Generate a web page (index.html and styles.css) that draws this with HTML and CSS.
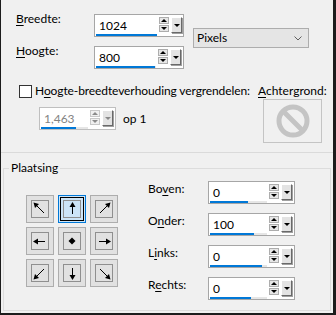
FILE: index.html
```html
<!DOCTYPE html>
<html lang="nl">
<head>
    <meta charset="UTF-8">
    <title>Canvasgrootte</title>
    <link rel="stylesheet" href="styles.css">
</head>
<body>
<div class="dialog">
    <div class="top">
        <div class="size-grid">
            <label class="lbl"><u>B</u>reedte:</label>
            <div class="spin">
                <div class="val-col"><span class="val">1024</span><span class="track"><span class="fill" style="width:61px"></span></span></div>
                <div class="arrows"><span class="up"></span><span class="dn"></span></div>
                <span class="drop"></span>
            </div>
            <div class="select">Pixels
                <svg width="8" height="5" viewBox="0 0 8 5"><path d="M0.5 0.5 L4 4 L7.5 0.5" fill="none" stroke="#606060" stroke-width="1"/></svg>
            </div>
            <label class="lbl"><u>H</u>oogte:</label>
            <div class="spin">
                <div class="val-col"><span class="val">800</span><span class="track"><span class="fill" style="width:59px"></span></span></div>
                <div class="arrows"><span class="up"></span><span class="dn"></span></div>
                <span class="drop"></span>
            </div>
        </div>

        <div class="lock">
            <div class="lock-main">
                <div class="check-row"><span class="checkbox"></span><label>H<u>o</u>ogte-breedteverhouding vergrendelen:</label></div>
                <div class="ratio-row">
                    <div class="spin ratio disabled">
                        <div class="val-col"><span class="val">1,463</span><span class="track"><span class="fill" style="width:35px"></span></span></div>
                        <div class="arrows"><span class="up"></span><span class="dn"></span></div>
                        <span class="drop"></span>
                    </div>
                    <span class="op">op 1</span>
                </div>
            </div>
            <div class="bg-col">
                <label><u>A</u>chtergrond:</label>
                <div class="swatch">
                    <svg width="36" height="36" viewBox="0 0 36 36"><circle cx="18" cy="18" r="14" fill="none" stroke="#c4c4c4" stroke-width="5"/><line x1="8.5" y1="8.5" x2="27.5" y2="27.5" stroke="#c4c4c4" stroke-width="5"/></svg>
                </div>
            </div>
        </div>
    </div>

    <fieldset class="place">
        <legend>Plaatsing</legend>
        <div class="place-body">
            <div class="anchors">
                <div class="anchor"><span class="inner"><svg width="16" height="16" viewBox="0 0 16 16"><path d="M12 12 L3 3" stroke="#000"/><path d="M1.5 1.5 L7 3 L3 7 Z" fill="#000"/></svg></span></div>
                <div class="anchor sel"><span class="inner"><svg width="16" height="16" viewBox="0 0 16 16"><path d="M8.5 4 V13" stroke="#000"/><path d="M8.5 1 L11.5 6 L5.5 6 Z" fill="#000"/></svg></span></div>
                <div class="anchor"><span class="inner"><svg width="16" height="16" viewBox="0 0 16 16"><path d="M4 12 L13 3" stroke="#000"/><path d="M14.5 1.5 L13 7 L9 3 Z" fill="#000"/></svg></span></div>
                <div class="anchor"><span class="inner"><svg width="16" height="16" viewBox="0 0 16 16"><path d="M4 8.5 H13" stroke="#000"/><path d="M1 8.5 L6 5.5 L6 11.5 Z" fill="#000"/></svg></span></div>
                <div class="anchor"><span class="inner"><svg width="16" height="16" viewBox="0 0 16 16"><path d="M8 4.5 L11.5 8 L8 11.5 L4.5 8 Z" fill="#000"/></svg></span></div>
                <div class="anchor"><span class="inner"><svg width="16" height="16" viewBox="0 0 16 16"><path d="M3 8.5 H12" stroke="#000"/><path d="M15 8.5 L10 5.5 L10 11.5 Z" fill="#000"/></svg></span></div>
                <div class="anchor"><span class="inner"><svg width="16" height="16" viewBox="0 0 16 16"><path d="M12 4 L3 13" stroke="#000"/><path d="M1.5 14.5 L3 9 L7 13 Z" fill="#000"/></svg></span></div>
                <div class="anchor"><span class="inner"><svg width="16" height="16" viewBox="0 0 16 16"><path d="M8.5 3 V12" stroke="#000"/><path d="M8.5 15 L11.5 10 L5.5 10 Z" fill="#000"/></svg></span></div>
                <div class="anchor"><span class="inner"><svg width="16" height="16" viewBox="0 0 16 16"><path d="M4 4 L13 13" stroke="#000"/><path d="M14.5 14.5 L9 13 L13 9 Z" fill="#000"/></svg></span></div>
            </div>

            <div class="offsets">
                <label class="off-lbl">Bo<u>v</u>en:</label>
                <div class="spin">
                    <div class="val-col"><span class="val">0</span><span class="track"><span class="fill" style="width:38px"></span></span></div>
                    <div class="arrows"><span class="up"></span><span class="dn"></span></div>
                    <span class="drop"></span>
                </div>
                <label class="off-lbl">O<u>n</u>der:</label>
                <div class="spin">
                    <div class="val-col"><span class="val">100</span><span class="track"><span class="fill" style="width:44px"></span></span></div>
                    <div class="arrows"><span class="up"></span><span class="dn"></span></div>
                    <span class="drop"></span>
                </div>
                <label class="off-lbl">L<u>i</u>nks:</label>
                <div class="spin">
                    <div class="val-col"><span class="val">0</span><span class="track"><span class="fill" style="width:52px"></span></span></div>
                    <div class="arrows"><span class="up"></span><span class="dn"></span></div>
                    <span class="drop"></span>
                </div>
                <label class="off-lbl">R<u>e</u>chts:</label>
                <div class="spin">
                    <div class="val-col"><span class="val">0</span><span class="track"><span class="fill" style="width:41px"></span></span></div>
                    <div class="arrows"><span class="up"></span><span class="dn"></span></div>
                    <span class="drop"></span>
                </div>
            </div>
        </div>
    </fieldset>
</div>
</body>
</html>
```

FILE: styles.css
```css
* { box-sizing: border-box; }
body { margin: 0; font-family: Lato, "Noto Sans", sans-serif; font-size: 12px; line-height: 16px; color: #000; background: #f0f0f0; }
u { text-decoration-thickness: 1px; text-underline-offset: 2px; }
label { white-space: nowrap; }

.dialog { width: 336px; height: 315px; display: flex; flex-direction: column; background: #f0f0f0; border-left: 1px solid #1c1c1c; border-right: 3px solid #1c1c1c; border-bottom: 2px solid #1c1c1c; }

/* bovenste deel */
.top { flex: none; height: 153px; padding: 14px 0 0 15px; border-bottom: 1px solid #dadada; }
.size-grid { display: grid; grid-template-columns: 78px 90px 125px; grid-template-rows: 23px 23px; row-gap: 9px; }
.lbl { margin-top: -3px; }
.select { grid-column: 3; grid-row: 1 / 3; height: 20px; margin: 14px 0 0 9px; padding: 0 6px 0 3px; display: flex; align-items: center; justify-content: space-between; background: #e5e5e5; border: 1px solid #adadad; }

/* spinbox */
.spin { height: 23px; display: grid; grid-template-columns: 1fr 10px 11px; column-gap: 2px; padding: 1px 2px 1px 1px; background: #fff; border: 1px solid #a6a6a6; }
.val-col { padding-top: 2px; }
.val { display: block; height: 16px; padding-left: 3px; }
.track { display: block; height: 2px; background: #e6e6e6; }
.fill { display: block; height: 100%; background: #0078d7; }
.arrows { display: flex; flex-direction: column; gap: 1px; padding-top: 1px; }
.up, .dn { height: 7px; display: flex; align-items: center; justify-content: center; background: #e6e6e6; border: 1px solid #adadad; }
.up::before { content: ""; border-left: 3px solid transparent; border-right: 3px solid transparent; border-bottom: 3px solid #000; }
.dn::before { content: ""; border-left: 3px solid transparent; border-right: 3px solid transparent; border-top: 3px solid #000; }
.drop { height: 16px; margin-top: 1px; display: flex; align-items: center; justify-content: center; background: #e3e3e3; border: 1px solid; border-color: #fff #696969 #696969 #fff; box-shadow: 1px 1px 0 #a0a0a0; }
.drop::before { content: ""; border-left: 3px solid transparent; border-right: 3px solid transparent; border-top: 3px solid #000; }

.disabled { border-color: #bfbfbf; color: #838383; }
.disabled .up, .disabled .dn { border-color: #c8c8c8; background: #f0f0f0; }
.disabled .up::before { border-bottom-color: #8a8a8a; }
.disabled .dn::before { border-top-color: #8a8a8a; }
.disabled .drop::before { border-top-color: #8a8a8a; }

/* vergrendelen */
.lock { display: flex; margin-top: 14px; }
.lock-main { width: 242px; }
.check-row { display: flex; align-items: center; height: 16px; }
.check-row label { letter-spacing: -0.1px; }
.checkbox { flex: none; width: 13px; height: 13px; margin: 0 3px; background: #fff; border: 1px solid #333; }
.ratio-row { display: flex; align-items: center; margin: 8px 0 0 23px; }
.ratio { width: 77px; }
.op { margin-left: 7px; }
.bg-col label { display: block; }
.swatch { width: 59px; height: 44px; margin-left: 5px; display: flex; align-items: center; justify-content: center; border: 1px solid #c4c4c4; }

/* plaatsing */
.place { flex: 1; min-width: 0; margin: 7px 2px 2px 2px; padding: 0; border: 1px solid #dcdcdc; }
.place legend { margin-left: 5px; padding: 0 2px; line-height: 16px; }
.place-body { display: flex; align-items: center; padding: 5px 0 9px 22px; }
.anchors { display: grid; grid-template-columns: repeat(3, 28px); grid-auto-rows: 28px; gap: 4px; }
.anchor { display: flex; align-items: center; justify-content: center; background: #e1e1e1; border: 1px solid #adadad; }
.anchor .inner { width: 18px; height: 18px; display: flex; border: 1px solid #8f8f8f; }
.anchor.sel { background: #cce4f7; border-color: #0078d7; box-shadow: inset 0 0 0 1px #cce4f7, inset 0 0 0 2px #000; }
.offsets { margin-left: 30px; display: grid; grid-template-columns: 60px 87px; grid-auto-rows: 23px; row-gap: 9px; }
.off-lbl { margin-top: 0; }
```
